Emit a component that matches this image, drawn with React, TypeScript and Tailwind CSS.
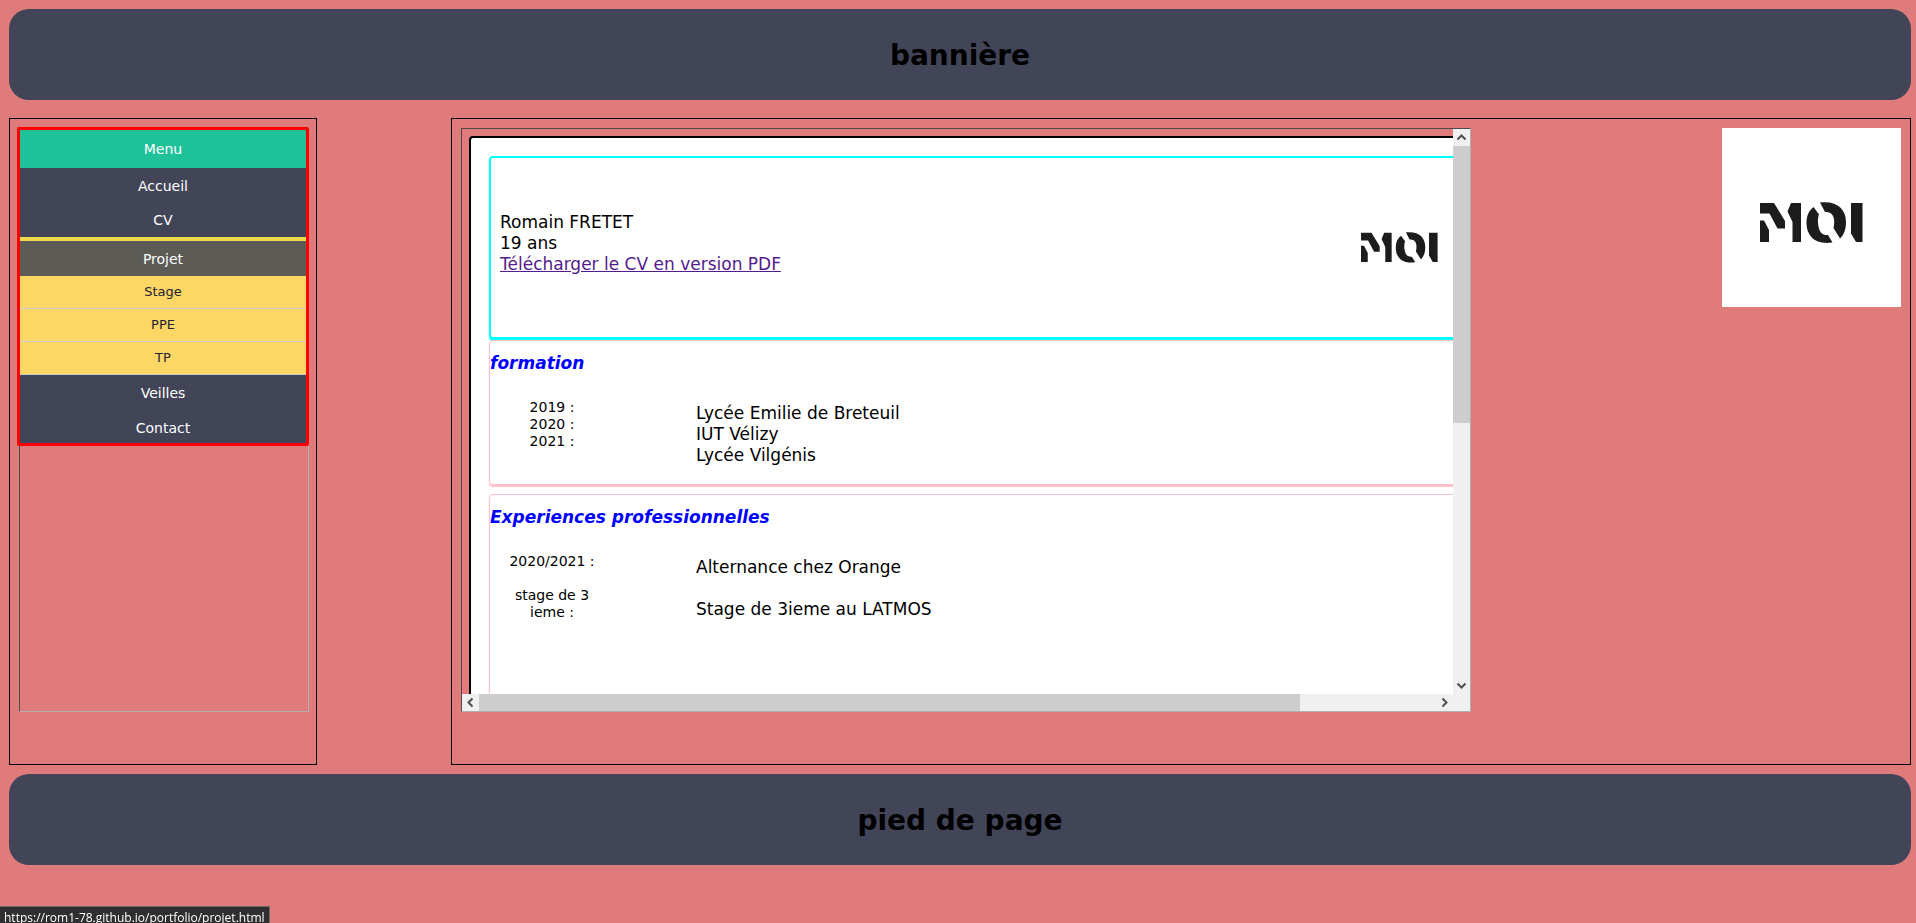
import React from "react";

function MoiMark({ className }: { className: string }) {
  return (
    <svg viewBox="0 -1 103 41" className={className} fill="#1c1c1c" role="img" aria-label="Logo">
      <path d="M0 0H14L25 18V25.5H17.5L9.5 10.5H0Z" />
      <path d="M0 17.5H4L9 27V39H0Z" />
      <path d="M31 0H41V39H32.5V19L27.5 8.5Z" />
      <path d="M53.5 4L59 11.5C57.5 15 57.5 22 59.5 27C61 31 64 32.5 68 32L72.5 39.5C55 42 46.5 33 46.5 20C46.5 12.500 49 7.500 53.5 4Z" />
      <path d="M60 -0.500C77 -2.500 86 6 86 19C86 26 84 32 80 35.500L73.500 25C75 18 75 8.500 65 9Z" />
      <path d="M91 0H102.500V39H96L91 30.500Z" />
    </svg>
  );
}

function Chevron({ className }: { className: string }) {
  return (
    <svg viewBox="0 0 17 17" className={className} fill="none" stroke="#505050" strokeWidth="2">
      <path d="M4.5 10.5L8.5 6.5L12.5 10.5" />
    </svg>
  );
}

const mainRow = "flex shrink-0 items-center justify-center text-sm text-white";
const subRow =
  "flex h-[33px] shrink-0 items-center justify-center border-b border-[#cccccc] bg-[#fcd765] text-[13px] text-[#222233]";

function SideMenu() {
  return (
    <nav className="-mt-0.5 -mr-px -ml-[3px] flex h-[319px] flex-col overflow-hidden rounded-xs border-3 border-[#ff0000] bg-[#424558]">
      <a href="#menu" className={mainRow + " h-[38px] bg-[#1fc198]"}>Menu</a>
      <a href="#accueil" className={mainRow + " h-[35px]"}>Accueil</a>
      <a href="#cv" className={mainRow + " h-[34px]"}>CV</a>
      <a href="#projet" className={mainRow + " h-[39px] border-t-4 border-[#f0d94b] bg-[#5c5b56]"}>Projet</a>
      <a href="#stage" className={subRow}>Stage</a>
      <a href="#ppe" className={subRow}>PPE</a>
      <a href="#tp" className={subRow}>TP</a>
      <a href="#veilles" className={mainRow + " h-[35px]"}>Veilles</a>
      <a href="#contact" className={mainRow + " h-[35px]"}>Contact</a>
    </nav>
  );
}

function Section({
  title,
  dates,
  children,
  className,
}: {
  title: string;
  dates: React.ReactNode;
  children: React.ReactNode;
  className: string;
}) {
  return (
    <section className={"rounded border border-[#ffc0cb] shadow-[0_2px_1px_#ffc0cb] " + className}>
      <h2 className="pt-3 text-[17px] leading-[21px] font-bold text-[#0000ff] italic">{title}</h2>
      <div className="flex pt-[25px]">
        <div className="ml-4 w-[92px] text-center text-sm leading-[17px]">{dates}</div>
        <div className="ml-[98px] pt-1 text-[17px] leading-[21px]">{children}</div>
      </div>
    </section>
  );
}

function CvDocument() {
  return (
    <div className="min-w-0 flex-1 overflow-hidden pt-[7px] pl-[7px]">
      <div className="h-[800px] w-[1200px] rounded border-2 border-black bg-white pt-[18px] pl-[18px]">
        <section className="flex h-[183px] items-center rounded border-2 border-[#00ffff] pl-[9px] shadow-[0_2px_1px_#00ffff]">
          <div className="w-[861px] pb-2 text-[17px] leading-[21px]">
            <p>Romain FRETET</p>
            <p>19 ans</p>
            <a href="#pdf" className="text-[#551a8b] underline">Télécharger le CV en version PDF</a>
          </div>
          <MoiMark className="w-[77px]" />
        </section>
        <Section
          title="formation"
          className="mt-px h-[145px]"
          dates={<><p>2019 :</p><p>2020 :</p><p>2021 :</p></>}
        >
          <p>Lycée Emilie de Breteuil</p>
          <p>IUT Vélizy</p>
          <p>Lycée Vilgénis</p>
        </Section>
        <Section
          title="Experiences professionnelles"
          className="mt-[9px] h-[260px]"
          dates={<><p>2020/2021 :</p><p className="mt-[17px]">stage de 3<br />ieme :</p></>}
        >
          <p>Alternance chez Orange</p>
          <p className="mt-[21px]">Stage de 3ieme au LATMOS</p>
        </Section>
      </div>
    </div>
  );
}

export default function App() {
  return (
    <div className="min-h-screen bg-[#df7b7a] pt-[9px] pr-[5px] pb-[58px] pl-[9px] font-['DejaVu_Sans',Verdana,sans-serif] text-black">
      <header className="flex h-[91px] items-center justify-center rounded-[20px] bg-[#424558] pt-0.5">
        <h1 className="text-[28px] font-bold">bannière</h1>
      </header>

      <div className="mt-[18px] flex h-[647px] justify-between">
        <aside className="w-[308px] border border-black pt-[9px] pr-[7px] pl-[9px]">
          <div className="h-[584px] border border-t-[#4c4c4c] border-r-[#b0b0b0] border-b-[#b0b0b0] border-l-[#4c4c4c]">
            <SideMenu />
          </div>
        </aside>

        <main className="flex w-[1460px] items-start justify-between border border-black p-[9px]">
          <div className="flex h-[584px] w-[1010px] flex-col border border-t-[#4c4c4c] border-r-[#b0b0b0] border-b-[#b0b0b0] border-l-[#4c4c4c]">
            <div className="flex min-h-0 flex-1">
              <CvDocument />
              <div className="flex w-[17px] flex-col bg-[#f0f0f0]">
                <Chevron className="size-[17px]" />
                <div className="h-[277px] bg-[#cdcdcd]" />
                <Chevron className="mt-auto size-[17px] rotate-180" />
              </div>
            </div>
            <div className="flex h-[17px] bg-[#f0f0f0] pr-[17px]">
              <Chevron className="size-[17px] -rotate-90" />
              <div className="w-[821px] bg-[#cdcdcd]" />
              <Chevron className="ml-auto size-[17px] rotate-90" />
            </div>
          </div>
          <div className="flex size-[179px] items-center justify-center bg-white pt-[9px]">
            <MoiMark className="w-[103px]" />
          </div>
        </main>
      </div>

      <footer className="mt-[9px] flex h-[91px] items-center justify-center rounded-[20px] bg-[#424558] pt-0.5">
        <h2 className="text-[28px] font-bold">pied de page</h2>
      </footer>

      <div className="fixed bottom-0 left-0 h-[17px] border-t border-r border-[#6b6b6b] bg-[#2f2f31] px-1 font-['Open_Sans',sans-serif] text-xs leading-[21px] text-white">
        https://rom1-78.github.io/portfolio/projet.html
      </div>
    </div>
  );
}
